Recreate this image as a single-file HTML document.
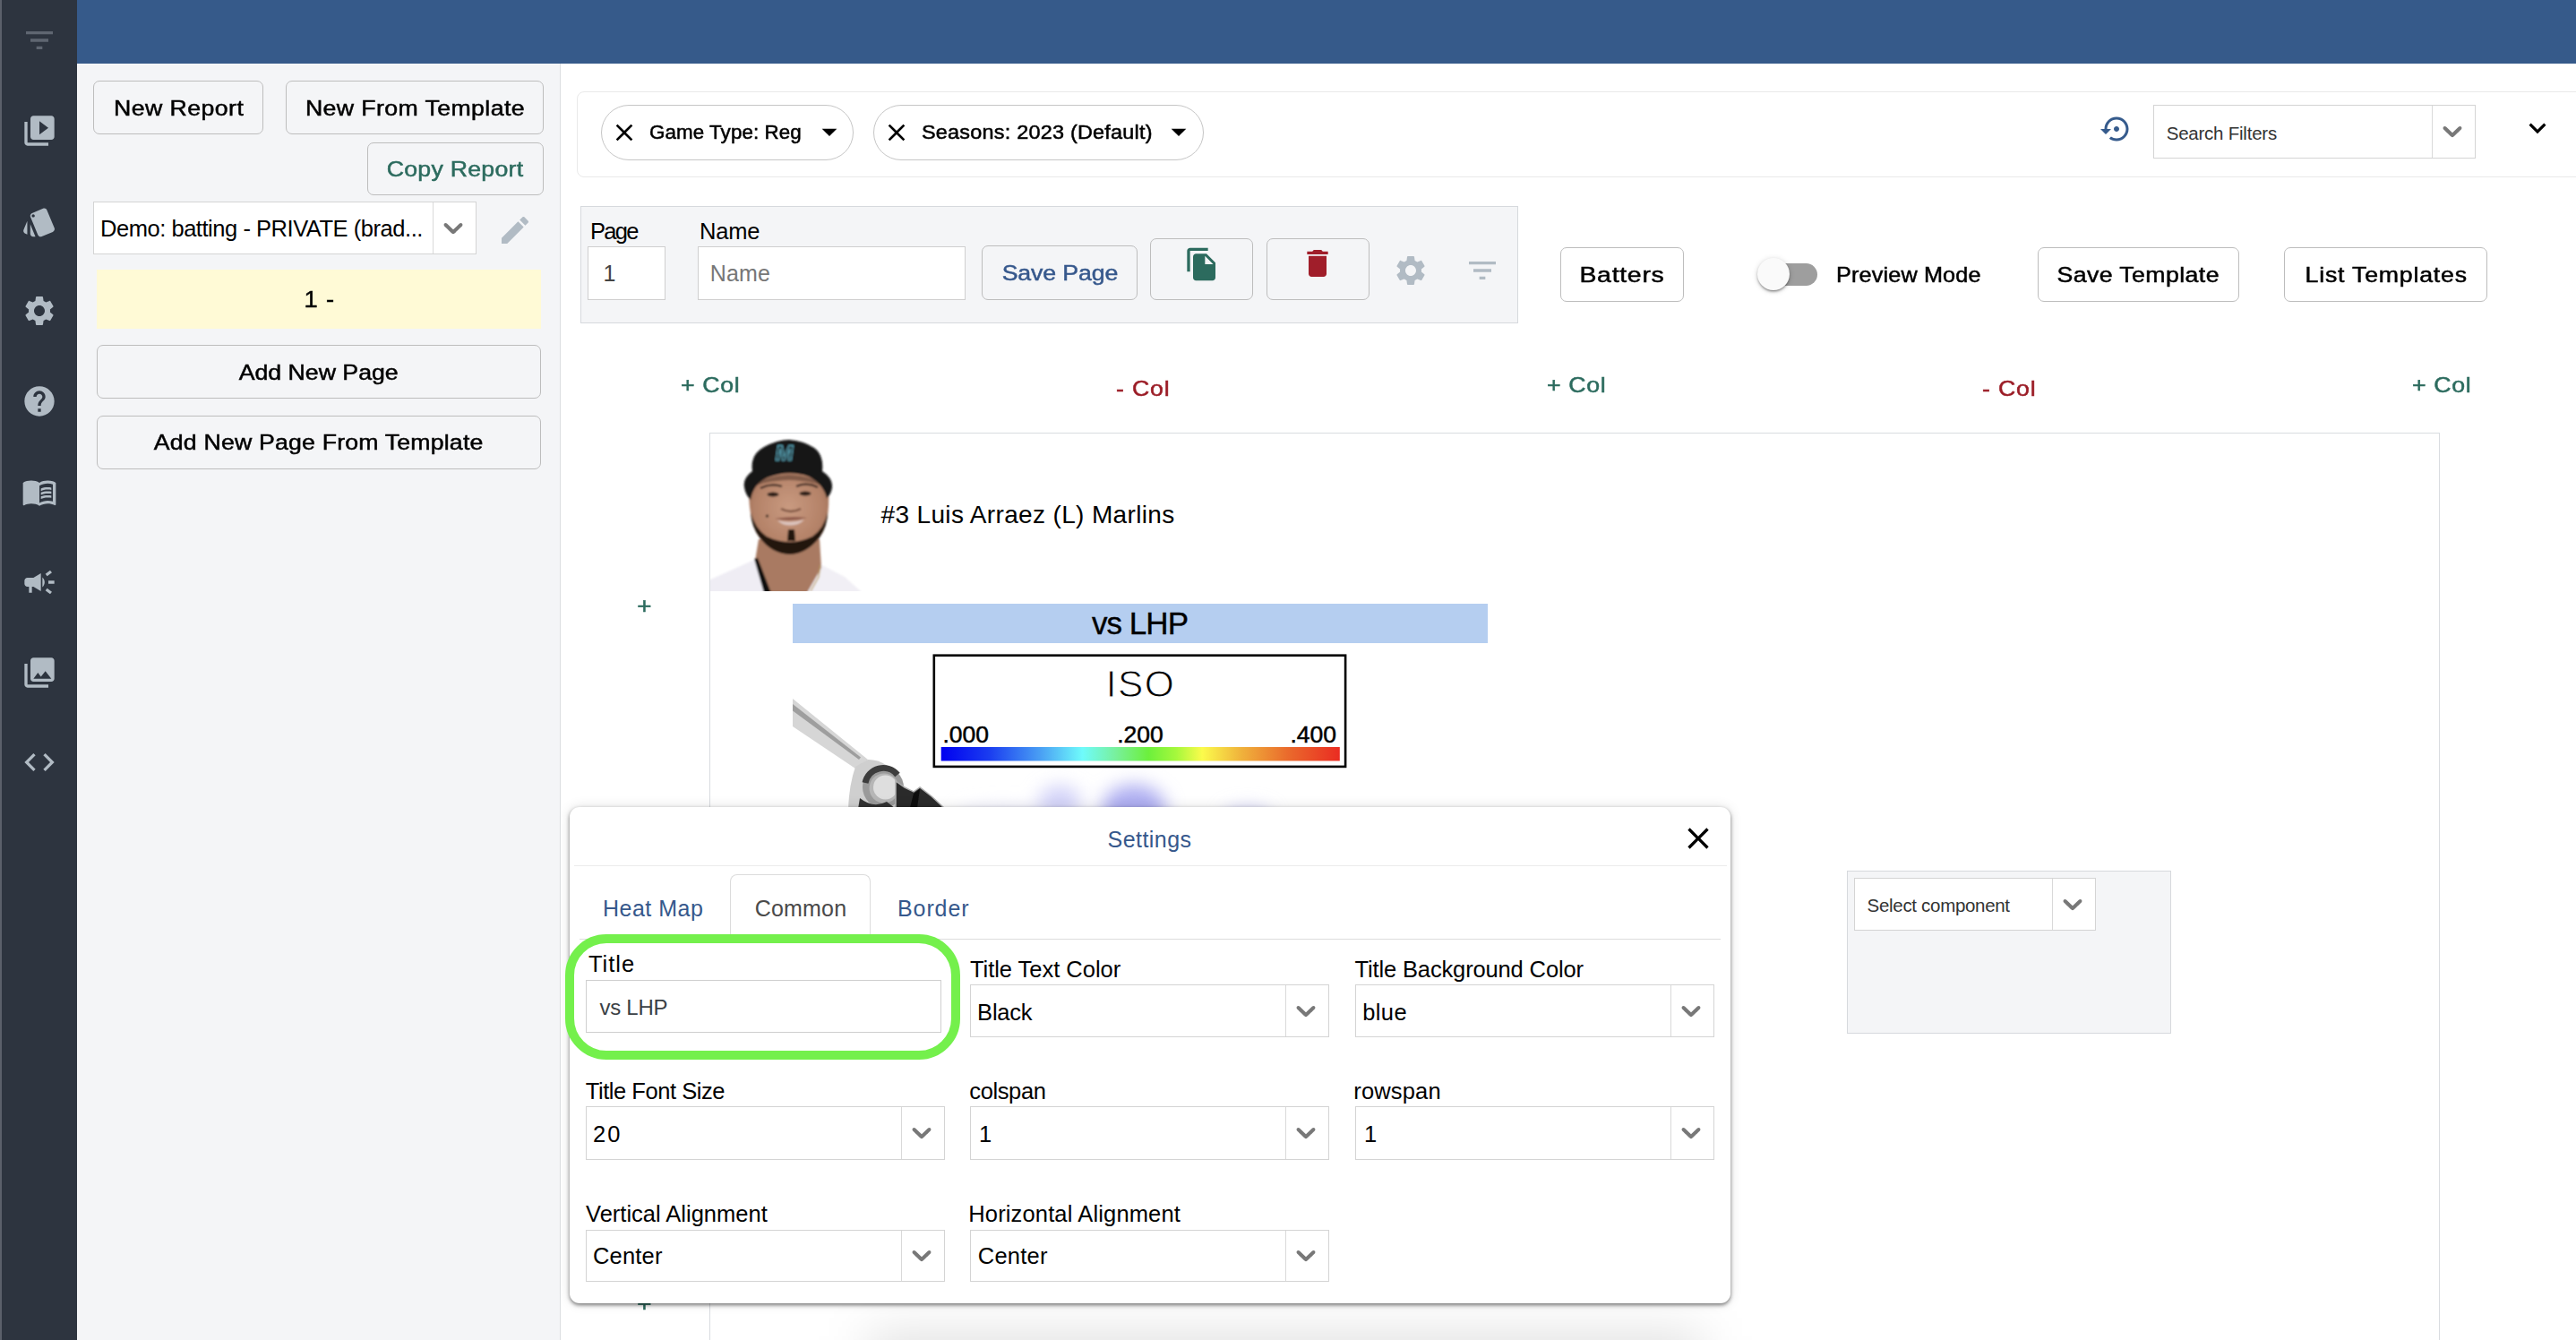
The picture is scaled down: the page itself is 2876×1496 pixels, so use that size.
<!DOCTYPE html>
<html lang="en"><head><meta charset="utf-8"><title>Report Builder</title>
<style>
html,body{margin:0;padding:0;}
body{width:2876px;height:1496px;overflow:hidden;position:relative;background:#fff;font-family:"Liberation Sans",sans-serif;}
body>*{position:absolute;box-sizing:border-box;}
.t{white-space:nowrap;}
.ic{display:block;}
#side{left:0;top:0;width:86px;height:1496px;background:#2d343f;}
#strip{left:0;top:0;width:2px;height:1496px;background:#5b606a;}
#top{left:86px;top:0;width:2790px;height:71px;background:#365a8a;}
#left{left:86px;top:71px;width:540px;height:1425px;background:#f4f5f7;border-right:1px solid #dcdee1;}
.btn{border:1px solid #bdbdbd;border-radius:7px;}
.pill{border:1px solid #c6c6c6;border-radius:31px;background:#fff;}
.sel{border:1px solid #d4d4d4;background:#fff;}
.inp{border:1px solid #cfcfcf;background:#fff;}
.sep{background:#d9d9d9;}
#bigshadow{left:970px;top:1490px;width:930px;height:60px;background:rgba(0,0,0,.13);filter:blur(28px);}
</style></head>
<body>
<div id="side"></div><div id="strip"></div><div id="top"></div><div id="left"></div>
<svg class="ic" style="left:24px;top:25px;width:40px;height:40px;fill:#5f6671" viewBox="0 0 24 24"><path d="M10 18h4v-2h-4v2zM3 6v2h18V6H3zm3 7h12v-2H6v2z"/></svg>
<svg class="ic" style="left:24px;top:126px;width:40px;height:40px;fill:#b1bbc4" viewBox="0 0 24 24"><path d="M4 6H2v14c0 1.1.9 2 2 2h14v-2H4V6zm16-4H8c-1.1 0-2 .9-2 2v12c0 1.1.9 2 2 2h12c1.1 0 2-.9 2-2V4c0-1.1-.9-2-2-2zm-8 12.5v-9l6 4.5-6 4.5z"/></svg>
<svg class="ic" style="left:24px;top:228px;width:40px;height:40px;fill:#b1bbc4" viewBox="0 0 24 24"><path d="M2.53 19.65l1.34.56v-9.03l-2.43 5.86c-.41 1.02.08 2.19 1.09 2.61zm19.5-3.7L17.07 3.98c-.31-.75-1.04-1.21-1.81-1.23-.26 0-.53.04-.79.15L7.1 5.95c-.75.31-1.21 1.03-1.23 1.8-.01.27.04.54.15.8l4.96 11.97c.31.76 1.05 1.22 1.83 1.23.26 0 .52-.05.77-.15l7.36-3.05c1.02-.42 1.51-1.59 1.09-2.6zM7.88 8.75c-.55 0-1-.45-1-1s.45-1 1-1 1 .45 1 1-.45 1-1 1zm-2 11c0 1.1.9 2 2 2h1.45l-3.45-8.34v6.34z"/></svg>
<svg class="ic" style="left:24px;top:327px;width:40px;height:40px;fill:#b1bbc4" viewBox="0 0 24 24"><path d="M19.14 12.94c.04-.3.06-.61.06-.94 0-.32-.02-.64-.07-.94l2.03-1.58c.18-.14.23-.41.12-.61l-1.92-3.32c-.12-.22-.37-.29-.59-.22l-2.39.96c-.5-.38-1.03-.7-1.62-.94l-.36-2.54c-.04-.24-.24-.41-.48-.41h-3.84c-.24 0-.43.17-.47.41l-.36 2.54c-.59.24-1.13.57-1.62.94l-2.39-.96c-.22-.08-.47 0-.59.22L2.74 8.87c-.12.21-.08.47.12.61l2.03 1.58c-.05.3-.09.63-.09.94s.02.64.07.94l-2.03 1.58c-.18.14-.23.41-.12.61l1.92 3.32c.12.22.37.29.59.22l2.39-.96c.5.38 1.03.7 1.62.94l.36 2.54c.05.24.24.41.48.41h3.84c.24 0 .44-.17.47-.41l.36-2.54c.59-.24 1.13-.56 1.62-.94l2.39.96c.22.08.47 0 .59-.22l1.92-3.32c.12-.22.07-.47-.12-.61l-2.01-1.58zM12 15.6c-1.98 0-3.6-1.62-3.6-3.6s1.62-3.6 3.6-3.6 3.6 1.62 3.6 3.6-1.62 3.6-3.6 3.6z"/></svg>
<svg class="ic" style="left:24px;top:428px;width:40px;height:40px;fill:#b1bbc4" viewBox="0 0 24 24"><path d="M12 2C6.48 2 2 6.48 2 12s4.48 10 10 10 10-4.48 10-10S17.52 2 12 2zm1 17h-2v-2h2v2zm2.07-7.75l-.9.92C13.45 12.9 13 13.5 13 15h-2v-.5c0-1.1.45-2.1 1.17-2.83l1.24-1.26c.37-.36.59-.86.59-1.41 0-1.1-.9-2-2-2s-2 .9-2 2H8c0-2.21 1.79-4 4-4s4 1.79 4 4c0 .88-.36 1.68-.93 2.25z"/></svg>
<svg class="ic" style="left:24px;top:529px;width:40px;height:40px;fill:#b1bbc4" viewBox="0 0 24 24"><path d="M21 5c-1.11-.35-2.33-.5-3.5-.5-1.95 0-4.05.4-5.5 1.5-1.45-1.1-3.55-1.5-5.5-1.5S2.45 4.9 1 6v14.65c0 .25.25.5.5.5.1 0 .15-.05.25-.05C3.1 20.45 5.05 20 6.5 20c1.95 0 4.05.4 5.5 1.5 1.35-.85 3.8-1.5 5.5-1.5 1.65 0 3.35.3 4.75 1.05.1.05.15.05.25.05.25 0 .5-.25.5-.5V6c-.6-.45-1.25-.75-2-1zm0 13.5c-1.1-.35-2.3-.5-3.5-.5-1.7 0-4.15.65-5.5 1.5V8c1.35-.85 3.8-1.5 5.5-1.5 1.2 0 2.4.15 3.5.5v11.5zM17.5 10.5c.88 0 1.73.09 2.5.26V9.24c-.79-.15-1.64-.24-2.5-.24-1.7 0-3.24.29-4.5.83v1.66c1.13-.64 2.7-.99 4.5-.99zM13 12.49v1.66c1.13-.64 2.7-.99 4.5-.99.88 0 1.73.09 2.5.26V11.9c-.79-.15-1.64-.24-2.5-.24-1.7 0-3.24.3-4.5.83zM17.5 14.33c-1.7 0-3.24.29-4.5.83v1.66c1.13-.64 2.7-.99 4.5-.99.88 0 1.73.09 2.5.26v-1.52c-.79-.16-1.64-.24-2.5-.24z"/></svg>
<svg class="ic" style="left:24px;top:630px;width:40px;height:40px;fill:#b1bbc4" viewBox="0 0 24 24"><path d="M18 11v2h4v-2h-4zm-2 6.61c.96.71 2.21 1.65 3.2 2.39.4-.53.8-1.07 1.2-1.6-.99-.74-2.24-1.68-3.2-2.4-.4.54-.8 1.08-1.2 1.61zM20.4 5.6c-.4-.53-.8-1.07-1.2-1.6-.99.74-2.24 1.68-3.2 2.4.4.53.8 1.07 1.2 1.6.96-.72 2.21-1.65 3.2-2.4zM4 9c-1.1 0-2 .9-2 2v2c0 1.1.9 2 2 2h1v4h2v-4h1l5 3V6L8 9H4zm11.5 3c0-1.33-.58-2.53-1.5-3.35v6.69c.92-.81 1.5-2.01 1.5-3.34z"/></svg>
<svg class="ic" style="left:24px;top:731px;width:40px;height:40px;fill:#b1bbc4" viewBox="0 0 24 24"><path d="M22 16V4c0-1.1-.9-2-2-2H8c-1.1 0-2 .9-2 2v12c0 1.1.9 2 2 2h12c1.1 0 2-.9 2-2zm-11-4l2.03 2.71L16 11l4 5H8l3-4zM2 6v14c0 1.1.9 2 2 2h14v-2H4V6H2z"/></svg>
<svg class="ic" style="left:24px;top:831px;width:40px;height:40px;fill:#b1bbc4" viewBox="0 0 24 24"><path d="M9.4 16.6L4.8 12l4.6-4.6L8 6l-6 6 6 6 1.4-1.4zm5.2 0l4.6-4.6-4.6-4.6L16 6l6 6-6 6-1.4-1.4z"/></svg>
<div class="btn" style="left:104px;top:90px;width:190px;height:60px;background:transparent;"></div>
<div class="t" style="left:104.19px;width:190px;text-align:center;top:104.67px;font-size:24.5px;line-height:31.85px;color:#000;letter-spacing:0.39px;-webkit-text-stroke:0.5px;"><span id="b_new" style="display:inline-block;transform:scaleX(1.09);transform-origin:center center">New Report</span></div>
<div class="btn" style="left:319px;top:90px;width:288px;height:60px;background:transparent;"></div>
<div class="t" style="left:319.18px;width:288px;text-align:center;top:104.67px;font-size:24.5px;line-height:31.85px;color:#000;letter-spacing:0.36px;-webkit-text-stroke:0.5px;"><span id="b_nft" style="display:inline-block;transform:scaleX(1.09);transform-origin:center center">New From Template</span></div>
<div class="btn" style="left:409.5px;top:158.5px;width:197.5px;height:59px;background:transparent;"></div>
<div class="t" style="left:409.36px;width:198px;text-align:center;top:172.67px;font-size:24.5px;line-height:31.85px;color:#2c6b5e;letter-spacing:0.23px;-webkit-text-stroke:0.5px;"><span id="b_copy" style="display:inline-block;transform:scaleX(1.09);transform-origin:center center">Copy Report</span></div>
<div class="sel" style="left:104px;top:225px;width:427.5px;height:59.4px;"></div>
<div class="sep" style="left:483px;top:226px;width:1px;height:57.4px;"></div>
<svg class="ic" style="left:488px;top:235.9px;width:36px;height:36px;fill:#787878" viewBox="0 0 20 20"><path d="M4.516 7.548c0.436-0.446 1.043-0.481 1.576 0l3.908 3.747 3.908-3.747c0.533-0.481 1.141-0.446 1.574 0 0.436 0.445 0.408 1.197 0 1.615-0.406 0.418-4.695 4.502-4.695 4.502-0.217 0.223-0.502 0.335-0.787 0.335s-0.570-0.112-0.789-0.335c0 0-4.287-4.084-4.695-4.502s-0.436-1.170 0-1.615z"/></svg>
<div class="t" style="left:112px;top:239.43px;font-size:25.5px;line-height:33.15px;color:#000;letter-spacing:-0.46px;"><span id="s_demo">Demo: batting - PRIVATE (brad...</span></div>
<svg class="ic" style="left:555px;top:237px;width:40px;height:40px;fill:#b1bbc4" viewBox="0 0 24 24"><path d="M3 17.25V21h3.75L17.81 9.94l-3.75-3.75L3 17.25zM20.71 7.04c.39-.39.39-1.02 0-1.41l-2.34-2.34c-.39-.39-1.02-.39-1.41 0l-1.83 1.83 3.75 3.75 1.83-1.83z"/></svg>
<div class="ab" style="left:108px;top:301px;width:496px;height:66px;background:#fffad6;"></div>
<div class="t" style="left:156.38px;width:400px;text-align:center;top:317.75px;font-size:25px;line-height:32.5px;color:#000;letter-spacing:0.76px;-webkit-text-stroke:0.5px;"><span id="t_1" style="display:inline-block;transform:scaleX(1.09);transform-origin:center center">1 -</span></div>
<div class="btn" style="left:108px;top:385px;width:496px;height:60px;background:transparent;"></div>
<div class="t" style="left:108px;width:496px;text-align:center;top:399.68px;font-size:24.5px;line-height:31.85px;color:#000;letter-spacing:-0.01px;-webkit-text-stroke:0.5px;"><span id="b_anp" style="display:inline-block;transform:scaleX(1.09);transform-origin:center center">Add New Page</span></div>
<div class="btn" style="left:108px;top:463.5px;width:496px;height:60.5px;background:transparent;"></div>
<div class="t" style="left:108.08px;width:496px;text-align:center;top:478.43px;font-size:24.5px;line-height:31.85px;color:#000;letter-spacing:0.16px;-webkit-text-stroke:0.5px;"><span id="b_anpt" style="display:inline-block;transform:scaleX(1.09);transform-origin:center center">Add New Page From Template</span></div>
<div class="ab" style="left:644px;top:101.5px;width:2256px;height:96px;border:1px solid #e9e9e9;border-radius:8px;background:#fff;"></div>
<div class="pill" style="left:671px;top:117px;width:282.3px;height:62px;"></div>
<div class="pill" style="left:975px;top:117px;width:368.5px;height:62px;"></div>
<svg class="ic" style="left:681px;top:132px;width:32px;height:32px;fill:#000" viewBox="0 0 24 24"><path d="M19 6.41L17.59 5 12 10.59 6.41 5 5 6.41 10.59 12 5 17.59 6.41 19 12 13.41 17.59 19 19 17.59 13.41 12z"/></svg>
<svg class="ic" style="left:985px;top:132px;width:32px;height:32px;fill:#000" viewBox="0 0 24 24"><path d="M19 6.41L17.59 5 12 10.59 6.41 5 5 6.41 10.59 12 5 17.59 6.41 19 12 13.41 17.59 19 19 17.59 13.41 12z"/></svg>
<div class="t" style="left:725.16px;top:134.53px;font-size:21.5px;line-height:27.95px;color:#000;letter-spacing:0.08px;-webkit-text-stroke:0.5px;"><span id="p_gt" style="display:inline-block;transform:scaleX(1.04);transform-origin:left center">Game Type: Reg</span></div>
<div class="t" style="left:1028.91px;top:134.53px;font-size:21.5px;line-height:27.95px;color:#000;letter-spacing:0.2px;-webkit-text-stroke:0.5px;"><span id="p_se" style="display:inline-block;transform:scaleX(1.09);transform-origin:left center">Seasons: 2023 (Default)</span></div>
<svg class="ic" style="left:905.5px;top:127.2px;width:40px;height:40px;fill:#000" viewBox="0 0 24 24"><path d="M7 10l5 5 5-5z"/></svg>
<svg class="ic" style="left:1296.4px;top:127.2px;width:40px;height:40px;fill:#000" viewBox="0 0 24 24"><path d="M7 10l5 5 5-5z"/></svg>
<svg class="ic" style="left:2345px;top:125.5px;width:36px;height:36px;fill:#365b8c" viewBox="0 0 24 24"><path d="M14 12c0-1.1-.9-2-2-2s-2 .9-2 2 .9 2 2 2 2-.9 2-2zm-2-9c-4.970 0-9 4.030-9 9H0l4 4 4-4H5c0-3.870 3.130-7 7-7s7 3.130 7 7-3.130 7-7 7c-1.510 0-2.910-.490-4.060-1.300l-1.420 1.440C8.040 20.300 9.940 21 12 21c4.970 0 9-4.030 9-9s-4.030-9-9-9z"/></svg>
<div class="sel" style="left:2404px;top:117.3px;width:360px;height:59.4px;"></div>
<div class="sep" style="left:2715px;top:118.3px;width:1px;height:57.4px;"></div>
<svg class="ic" style="left:2720.25px;top:128.2px;width:36px;height:36px;fill:#787878" viewBox="0 0 20 20"><path d="M4.516 7.548c0.436-0.446 1.043-0.481 1.576 0l3.908 3.747 3.908-3.747c0.533-0.481 1.141-0.446 1.574 0 0.436 0.445 0.408 1.197 0 1.615-0.406 0.418-4.695 4.502-4.695 4.502-0.217 0.223-0.502 0.335-0.787 0.335s-0.570-0.112-0.789-0.335c0 0-4.287-4.084-4.695-4.502s-0.436-1.170 0-1.615z"/></svg>
<div class="t" style="left:2418.7px;top:135.98px;font-size:20.5px;line-height:26.65px;color:#333;letter-spacing:-0.23px;"><span id="s_sf">Search Filters</span></div>
<svg class="ic" style="left:2813.5px;top:123.5px;width:38px;height:38px;fill:#000" viewBox="0 0 24 24"><path d="M16.59 8.590L12 13.170 7.410 8.590 6 10l6 6 6-6z"/></svg>
<div class="ab" style="left:648px;top:230px;width:1047px;height:131px;background:#f4f5f7;border:1px solid #d6d9dd;"></div>
<div class="t" style="left:659px;top:241.93px;font-size:25.5px;line-height:33.15px;color:#000;letter-spacing:-1.67px;"><span id="l_page">Page</span></div>
<div class="t" style="left:781px;top:241.93px;font-size:25.5px;line-height:33.15px;color:#000;letter-spacing:-0.23px;"><span id="l_name">Name</span></div>
<div class="inp" style="left:656px;top:275px;width:87px;height:59.6px;"></div>
<div class="inp" style="left:779px;top:275px;width:298.5px;height:59.6px;"></div>
<div class="t" style="left:673.4px;top:288.75px;font-size:25px;line-height:32.5px;color:#444;letter-spacing:0px;"><span id="i_1">1</span></div>
<div class="t" style="left:792.8px;top:288.75px;font-size:25px;line-height:32.5px;color:#777;letter-spacing:0.18px;"><span id="i_name">Name</span></div>
<div class="btn" style="left:1096px;top:274px;width:174px;height:61px;background:transparent;"></div>
<div class="t" style="left:1095.94px;width:174px;text-align:center;top:289.18px;font-size:24.5px;line-height:31.85px;color:#36588c;letter-spacing:-0.12px;-webkit-text-stroke:0.5px;"><span id="b_save" style="display:inline-block;transform:scaleX(1.09);transform-origin:center center">Save Page</span></div>
<div class="btn" style="left:1284px;top:266px;width:115px;height:69px;background:transparent;"></div>
<svg class="ic" style="left:1322px;top:274.5px;width:40px;height:40px;fill:#2c6b5e" viewBox="0 0 24 24"><path d="M16 1H4c-1.1 0-2 .9-2 2v14h2V3h12V1zm-1 4l6 6v10c0 1.1-.9 2-2 2H7.990C6.89 23 6 22.100 6 21l.01-14c0-1.1.89-2 1.99-2h7zm-1 7h5.5L14 6.500V12z"/></svg>
<div class="btn" style="left:1414px;top:266px;width:115px;height:69px;background:transparent;"></div>
<svg class="ic" style="left:1451px;top:274px;width:40px;height:40px;fill:#a01e2a" viewBox="0 0 24 24"><path d="M6 19c0 1.1.9 2 2 2h8c1.1 0 2-.9 2-2V7H6v12zM19 4h-3.500l-1-1h-5l-1 1H5v2h14V4z"/></svg>
<svg class="ic" style="left:1555px;top:282px;width:40px;height:40px;fill:#b1bbc4" viewBox="0 0 24 24"><path d="M19.14 12.94c.04-.3.06-.61.06-.94 0-.32-.02-.64-.07-.94l2.03-1.58c.18-.14.23-.41.12-.61l-1.92-3.32c-.12-.22-.37-.29-.59-.22l-2.39.96c-.5-.38-1.03-.7-1.62-.94l-.36-2.54c-.04-.24-.24-.41-.48-.41h-3.84c-.24 0-.43.17-.47.41l-.36 2.54c-.59.24-1.13.57-1.62.94l-2.39-.96c-.22-.08-.47 0-.59.22L2.74 8.87c-.12.21-.08.47.12.61l2.03 1.58c-.05.3-.09.63-.09.94s.02.64.07.94l-2.03 1.58c-.18.14-.23.41-.12.61l1.92 3.32c.12.22.37.29.59.22l2.39-.96c.5.38 1.03.7 1.62.94l.36 2.54c.05.24.24.41.48.41h3.84c.24 0 .44-.17.47-.41l.36-2.54c.59-.24 1.13-.56 1.62-.94l2.39.96c.22.08.47 0 .59-.22l1.92-3.32c.12-.22.07-.47-.12-.61l-2.01-1.58zM12 15.6c-1.98 0-3.6-1.62-3.6-3.6s1.62-3.6 3.6-3.6 3.6 1.62 3.6 3.6-1.62 3.6-3.6 3.6z"/></svg>
<svg class="ic" style="left:1635px;top:281.7px;width:40px;height:40px;fill:#b1bbc4" viewBox="0 0 24 24"><path d="M10 18h4v-2h-4v2zM3 6v2h18V6H3zm3 7h12v-2H6v2z"/></svg>
<div class="btn" style="left:1742px;top:276px;width:138px;height:61px;background:#fff;"></div>
<div class="t" style="left:1742.31px;width:138px;text-align:center;top:291.18px;font-size:24.5px;line-height:31.85px;color:#000;letter-spacing:0.62px;-webkit-text-stroke:0.5px;"><span id="b_bat" style="display:inline-block;transform:scaleX(1.16);transform-origin:center center">Batters</span></div>
<div class="ab" style="left:1966px;top:293.5px;width:63px;height:25px;background:#9e9e9e;border-radius:12.5px;"></div>
<div class="ab" style="left:1962px;top:288px;width:36px;height:36px;background:#fafafa;border-radius:18px;box-shadow:0 2px 2px -1px rgba(0,0,0,.3),0 2px 3px rgba(0,0,0,.2),0 1px 6px rgba(0,0,0,.16);"></div>
<div class="t" style="left:2049.54px;top:290.57px;font-size:24.5px;line-height:31.85px;color:#000;letter-spacing:0.14px;-webkit-text-stroke:0.5px;"><span id="t_prev" style="display:inline-block;transform:scaleX(1.03);transform-origin:left center">Preview Mode</span></div>
<div class="btn" style="left:2275px;top:276px;width:225px;height:61px;background:#fff;"></div>
<div class="t" style="left:2275.19px;width:225px;text-align:center;top:291.18px;font-size:24.5px;line-height:31.85px;color:#000;letter-spacing:0.37px;-webkit-text-stroke:0.5px;"><span id="b_st" style="display:inline-block;transform:scaleX(1.09);transform-origin:center center">Save Template</span></div>
<div class="btn" style="left:2550px;top:276px;width:227px;height:61px;background:#fff;"></div>
<div class="t" style="left:2550.37px;width:227px;text-align:center;top:291.18px;font-size:24.5px;line-height:31.85px;color:#000;letter-spacing:0.73px;-webkit-text-stroke:0.5px;"><span id="b_lt" style="display:inline-block;transform:scaleX(1.09);transform-origin:center center">List Templates</span></div>
<div class="t" style="left:759.64px;top:414.38px;font-size:24.5px;line-height:31.85px;color:#2c6b5e;letter-spacing:0.58px;-webkit-text-stroke:0.5px;"><span id="c1" style="display:inline-block;transform:scaleX(1.09);transform-origin:left center">+ Col</span></div>
<div class="t" style="left:1245.91px;top:418.38px;font-size:24.5px;line-height:31.85px;color:#9b1c26;letter-spacing:0.76px;-webkit-text-stroke:0.5px;"><span id="c2" style="display:inline-block;transform:scaleX(1.09);transform-origin:left center">- Col</span></div>
<div class="t" style="left:1726.64px;top:414.38px;font-size:24.5px;line-height:31.85px;color:#2c6b5e;letter-spacing:0.58px;-webkit-text-stroke:0.5px;"><span id="c3" style="display:inline-block;transform:scaleX(1.09);transform-origin:left center">+ Col</span></div>
<div class="t" style="left:2212.91px;top:418.38px;font-size:24.5px;line-height:31.85px;color:#9b1c26;letter-spacing:0.76px;-webkit-text-stroke:0.5px;"><span id="c4" style="display:inline-block;transform:scaleX(1.09);transform-origin:left center">- Col</span></div>
<div class="t" style="left:2693.14px;top:414.38px;font-size:24.5px;line-height:31.85px;color:#2c6b5e;letter-spacing:0.58px;-webkit-text-stroke:0.5px;"><span id="c5" style="display:inline-block;transform:scaleX(1.09);transform-origin:left center">+ Col</span></div>
<div class="t" style="left:689px;width:60px;text-align:center;top:659.92px;font-size:25.5px;line-height:33.15px;color:#2c6b5e;letter-spacing:0px;-webkit-text-stroke:0.5px;"><span id="plus1" style="display:inline-block;transform:scaleX(1.09);transform-origin:center center">+</span></div>
<div class="t" style="left:689px;width:60px;text-align:center;top:1439.42px;font-size:25.5px;line-height:33.15px;color:#2c6b5e;letter-spacing:0px;-webkit-text-stroke:0.5px;"><span id="plus2" style="display:inline-block;transform:scaleX(1.09);transform-origin:center center">+</span></div>
<div class="ab" style="left:792px;top:483px;width:1932px;height:1117px;border:1px solid #d9dce0;background:#fff;"></div>
<svg class="ic" style="left:793px;top:484px;width:169px;height:176px" viewBox="0 0 169 176">
<defs><filter id="pb" x="-5%" y="-5%" width="110%" height="110%"><feGaussianBlur stdDeviation="1.2"/></filter>
<radialGradient id="skin" cx="50%" cy="45%" r="60%"><stop offset="0" stop-color="#c99a80"/><stop offset="0.7" stop-color="#b48268"/><stop offset="1" stop-color="#9a6b55"/></radialGradient>
<clipPath id="pc"><rect x="0" y="0" width="169" height="176"/></clipPath></defs>
<g clip-path="url(#pc)" filter="url(#pb)">
<path d="M-2 164 L49 141 L63 178 L-2 178Z" fill="#efedf4"/>
<path d="M123 146 L150 160 L170 178 L108 178Z" fill="#f1eff5"/>
<path d="M54 118 L122 118 L124 150 L108 178 L64 178 L50 142Z" fill="#a97a62"/>
<path d="M49 140 L53 139 L68 178 L60 178Z" fill="#111"/>
<path d="M123 147 L121 160 L112 176" stroke="#b89a5a" stroke-width="1.3" fill="none"/>
<path d="M43 62 Q42 40 87 40 Q133 40 132 62 Q134 100 122 116 Q108 134 89 135 Q68 134 55 116 Q43 100 43 62Z" fill="url(#skin)"/>
<path d="M45 88 Q46 104 55 116 Q68 134 89 135 Q108 134 122 116 Q131 103 131 88 Q127 106 114 115 Q101 121 89 121 Q76 121 63 115 Q50 106 45 88Z" fill="#21170f"/><path d="M47 60 Q60 47 88 46 Q116 47 129 60 Q116 53 88 52 Q60 53 47 60Z" fill="#6b4a3c" opacity="0.7"/>
<path d="M87 107 L94 107 L95 120 L86 120Z" fill="#21170f"/>
<path d="M75 97 Q90 101 105 96 Q99 102.500 90 102.500 Q80 102.500 75 97Z" fill="#dcc4be"/>
<path d="M72 95 Q90 92 108 94 Q90 99 72 95Z" fill="#8a5546"/>
<path d="M79 84 Q90 90 101 84" stroke="#7d5241" stroke-width="2.5" fill="none"/>
<ellipse cx="70" cy="68" rx="6.5" ry="2.6" fill="#2a1c18"/><ellipse cx="106" cy="67" rx="6.5" ry="2.6" fill="#2a1c18"/>
<path d="M56 61 Q68 55 80 59" stroke="#3a2720" stroke-width="2.2" fill="none"/><path d="M96 59 Q108 54 120 60" stroke="#3a2720" stroke-width="2.2" fill="none"/>
<circle cx="63.500" cy="92" r="1.6" fill="#2a1c18"/>
<path d="M38 60 Q36 50 47 42 Q44 24 60 15 Q75 7 88 7 Q104 8 116 16 Q127 24 125 42 Q137 50 136 60 Q135 68 130 72 Q126 56 110 48 Q88 40 64 49 Q48 56 45 74 Q39 68 38 60Z" fill="#131313"/>
<text x="86" y="30" font-family="Liberation Sans, sans-serif" font-weight="bold" font-size="24" text-anchor="middle" fill="#1a1a1a" stroke="#5fb0c4" stroke-width="1.1" transform="skewX(-8)">M</text>
</g></svg>
<div class="t" style="left:983.5px;top:556.8px;font-size:28px;line-height:36.4px;color:#000;letter-spacing:0.35px;"><span id="t_player">#3 Luis Arraez (L) Marlins</span></div>
<div class="ab" style="left:885px;top:674px;width:776px;height:44px;background:#b5cef0;"></div>
<div class="t" style="left:1072.53px;width:400px;text-align:center;top:673.25px;font-size:35px;line-height:45.5px;color:#000;letter-spacing:-0.95px;-webkit-text-stroke:0.4px;"><span id="t_vs">vs LHP</span></div>
<svg class="ic" style="left:885px;top:720px;width:776px;height:182px" viewBox="885 720 776 182">
<defs><filter id="hb" x="-50%" y="-50%" width="200%" height="200%"><feGaussianBlur stdDeviation="10"/></filter>
<filter id="sb"><feGaussianBlur stdDeviation="0.6"/></filter>
<linearGradient id="jet" x1="0" x2="1" y1="0" y2="0"><stop offset="0" stop-color="#0000f0"/><stop offset="0.12" stop-color="#1a3cf0"/><stop offset="0.25" stop-color="#4aa0f4"/><stop offset="0.355" stop-color="#6ffbfb"/><stop offset="0.44" stop-color="#78f09a"/><stop offset="0.52" stop-color="#6cf03c"/><stop offset="0.59" stop-color="#a6f83c"/><stop offset="0.655" stop-color="#fbfb4c"/><stop offset="0.75" stop-color="#f0b43c"/><stop offset="0.87" stop-color="#ea6a2c"/><stop offset="1" stop-color="#ea2c22"/></linearGradient></defs>
<g filter="url(#hb)"><ellipse cx="1183" cy="896" rx="24" ry="19" fill="#d2d2f8"/><ellipse cx="1266" cy="903" rx="36" ry="27" fill="#adadf1"/><ellipse cx="1393" cy="912" rx="26" ry="11" fill="#d4d4f8"/><ellipse cx="1120" cy="910" rx="50" ry="10" fill="#ececfc"/></g>
<g filter="url(#sb)">
<path d="M885 780 L969 848 L955 858 L885 811Z" fill="#d6d6d6"/>
<path d="M885 786 L961 845.500 L959 848 L885 793.500Z" fill="#9e9e9e"/>
<path d="M955 856 Q948 876 947 903 L1004 903 L1004 872 Q992 848 969 848Z" fill="#cfcfcf"/>
<circle cx="986" cy="879" r="23" fill="#9a9a9a"/>
<path d="M966 874 A20.500 20.500 0 0 1 1002 865" fill="none" stroke="#3c3c3c" stroke-width="7"/>
<circle cx="987" cy="880" r="16.500" fill="#b6b6b6"/>
<circle cx="988.500" cy="879" r="13.500" fill="#dedede"/>
<path d="M960 891 Q975 903 990 895 L1000 903 L958 903Z" fill="#333"/>
<path d="M1000 872 L1010 879 L1020 884 L1027 879 L1040 889 L1054 902 L1000 902Z" fill="#2c2c2c" stroke="#b0b0b0" stroke-width="1.500"/>
<path d="M1020 886 L1027 881 L1024 902 L1016 902Z" fill="#0c0c0c"/>
</g>
<rect x="1042.800" y="731.700" width="459.300" height="124.200" fill="#fff" stroke="#000" stroke-width="2.600"/>
<rect x="1050.700" y="834" width="445.100" height="15.500" fill="url(#jet)"/>
<text x="1273.500" y="778" text-anchor="middle" font-family="Liberation Sans, sans-serif" font-size="42.500" letter-spacing="1.500" fill="#000" stroke="#fff" stroke-width="1">ISO</text>
<text x="1052.400" y="829.300" font-family="Liberation Sans, sans-serif" font-size="26.500" fill="#000" stroke="#000" stroke-width="0.500">.000</text>
<text x="1273" y="829.300" text-anchor="middle" font-family="Liberation Sans, sans-serif" font-size="26.500" fill="#000" stroke="#000" stroke-width="0.500">.200</text>
<text x="1492" y="829.300" text-anchor="end" font-family="Liberation Sans, sans-serif" font-size="26.500" fill="#000" stroke="#000" stroke-width="0.500">.400</text>
</svg>
<div class="ab" style="left:2062px;top:972px;width:362px;height:182px;background:#f4f5f7;border:1px solid #d6d9dd;"></div>
<div class="sel" style="left:2070px;top:980.2px;width:270px;height:58.5px;"></div>
<div class="sep" style="left:2290.7px;top:981.2px;width:1px;height:56.5px;"></div>
<svg class="ic" style="left:2296.1px;top:990.65px;width:36px;height:36px;fill:#787878" viewBox="0 0 20 20"><path d="M4.516 7.548c0.436-0.446 1.043-0.481 1.576 0l3.908 3.747 3.908-3.747c0.533-0.481 1.141-0.446 1.574 0 0.436 0.445 0.408 1.197 0 1.615-0.406 0.418-4.695 4.502-4.695 4.502-0.217 0.223-0.502 0.335-0.787 0.335s-0.570-0.112-0.789-0.335c0 0-4.287-4.084-4.695-4.502s-0.436-1.170 0-1.615z"/></svg>
<div class="t" style="left:2084.6px;top:998.42px;font-size:20.5px;line-height:26.65px;color:#333;letter-spacing:-0.31px;"><span id="s_sc">Select component</span></div>
<div id="bigshadow"></div>
<div class="ab" style="left:636px;top:900.5px;width:1296px;height:554.1px;background:#fff;border-radius:11px;box-shadow:0 2px 4px rgba(0,0,0,.5),0 0 14px rgba(0,0,0,.12);"></div>
<div class="t" style="left:1133.53px;width:300px;text-align:center;top:920.75px;font-size:25px;line-height:32.5px;color:#36588c;letter-spacing:0.46px;"><span id="m_set">Settings</span></div>
<svg class="ic" style="left:1876px;top:916.4px;width:40px;height:40px;fill:#000" viewBox="0 0 24 24"><path d="M19 6.41L17.59 5 12 10.59 6.41 5 5 6.41 10.59 12 5 17.59 6.41 19 12 13.41 17.59 19 19 17.59 13.41 12z"/></svg>
<div class="ab" style="left:641px;top:966px;width:1287px;height:1px;background:#ececec;"></div>
<div class="ab" style="left:647px;top:1048px;width:1274px;height:1px;background:#dcdcdc;"></div>
<div class="ab" style="left:815.4px;top:976.4px;width:156.2px;height:72.6px;border:1px solid #dcdcdc;border-bottom:1px solid #fff;border-radius:8px 8px 0 0;background:#fff;"></div>
<div class="t" style="left:673px;top:997.75px;font-size:25px;line-height:32.5px;color:#36588c;letter-spacing:0.49px;"><span id="tab1">Heat Map</span></div>
<div class="t" style="left:842.65px;top:997.75px;font-size:25px;line-height:32.5px;color:#4a4a4a;letter-spacing:0.2px;"><span id="tab2">Common</span></div>
<div class="t" style="left:1002px;top:997.75px;font-size:25px;line-height:32.5px;color:#36588c;letter-spacing:0.9px;"><span id="tab3">Border</span></div>
<div class="t" style="left:657px;top:1060.12px;font-size:25.5px;line-height:33.15px;color:#000;letter-spacing:0.96px;"><span id="l_title">Title</span></div>
<div class="inp" style="left:654px;top:1094.4px;width:396.8px;height:59px;"></div>
<div class="t" style="left:669.4px;top:1108.9px;font-size:24px;line-height:31.2px;color:#3a3f45;letter-spacing:-0.25px;"><span id="i_vs">vs LHP</span></div>
<div class="t" style="left:1082.9px;top:1066.42px;font-size:25.5px;line-height:33.15px;color:#000;letter-spacing:-0.02px;"><span id="l_ttc">Title Text Color</span></div>
<div class="sel" style="left:1083.4px;top:1099.4px;width:400.4px;height:59.1px;"></div>
<div class="sep" style="left:1435.1px;top:1100.4px;width:1px;height:57.1px;"></div>
<svg class="ic" style="left:1440.2px;top:1110.15px;width:36px;height:36px;fill:#787878" viewBox="0 0 20 20"><path d="M4.516 7.548c0.436-0.446 1.043-0.481 1.576 0l3.908 3.747 3.908-3.747c0.533-0.481 1.141-0.446 1.574 0 0.436 0.445 0.408 1.197 0 1.615-0.406 0.418-4.695 4.502-4.695 4.502-0.217 0.223-0.502 0.335-0.787 0.335s-0.570-0.112-0.789-0.335c0 0-4.287-4.084-4.695-4.502s-0.436-1.170 0-1.615z"/></svg>
<div class="t" style="left:1091.1px;top:1113.67px;font-size:25.5px;line-height:33.15px;color:#000;letter-spacing:-0.21px;"><span id="s_black">Black</span></div>
<div class="t" style="left:1512.5px;top:1066.42px;font-size:25.5px;line-height:33.15px;color:#000;letter-spacing:-0.14px;"><span id="l_tbc">Title Background Color</span></div>
<div class="sel" style="left:1513px;top:1099.4px;width:400.6px;height:59.1px;"></div>
<div class="sep" style="left:1865.2px;top:1100.4px;width:1px;height:57.1px;"></div>
<svg class="ic" style="left:1870.15px;top:1110.15px;width:36px;height:36px;fill:#787878" viewBox="0 0 20 20"><path d="M4.516 7.548c0.436-0.446 1.043-0.481 1.576 0l3.908 3.747 3.908-3.747c0.533-0.481 1.141-0.446 1.574 0 0.436 0.445 0.408 1.197 0 1.615-0.406 0.418-4.695 4.502-4.695 4.502-0.217 0.223-0.502 0.335-0.787 0.335s-0.570-0.112-0.789-0.335c0 0-4.287-4.084-4.695-4.502s-0.436-1.170 0-1.615z"/></svg>
<div class="t" style="left:1521.25px;top:1113.67px;font-size:25.5px;line-height:33.15px;color:#000;letter-spacing:0.38px;"><span id="s_blue">blue</span></div>
<div class="t" style="left:653.8px;top:1202.42px;font-size:25.5px;line-height:33.15px;color:#000;letter-spacing:-0.46px;"><span id="l_tfs">Title Font Size</span></div>
<div class="sel" style="left:654px;top:1235.4px;width:400.8px;height:59.2px;"></div>
<div class="sep" style="left:1006px;top:1236.4px;width:1px;height:57.2px;"></div>
<svg class="ic" style="left:1011.15px;top:1246.2px;width:36px;height:36px;fill:#787878" viewBox="0 0 20 20"><path d="M4.516 7.548c0.436-0.446 1.043-0.481 1.576 0l3.908 3.747 3.908-3.747c0.533-0.481 1.141-0.446 1.574 0 0.436 0.445 0.408 1.197 0 1.615-0.406 0.418-4.695 4.502-4.695 4.502-0.217 0.223-0.502 0.335-0.787 0.335s-0.570-0.112-0.789-0.335c0 0-4.287-4.084-4.695-4.502s-0.436-1.170 0-1.615z"/></svg>
<div class="t" style="left:661.95px;top:1249.72px;font-size:25.5px;line-height:33.15px;color:#000;letter-spacing:2.25px;"><span id="s_20">20</span></div>
<div class="t" style="left:1082.3px;top:1202.42px;font-size:25.5px;line-height:33.15px;color:#000;letter-spacing:-0.38px;"><span id="l_col">colspan</span></div>
<div class="sel" style="left:1083.4px;top:1235.4px;width:400.4px;height:59.2px;"></div>
<div class="sep" style="left:1435.1px;top:1236.4px;width:1px;height:57.2px;"></div>
<svg class="ic" style="left:1440.2px;top:1246.2px;width:36px;height:36px;fill:#787878" viewBox="0 0 20 20"><path d="M4.516 7.548c0.436-0.446 1.043-0.481 1.576 0l3.908 3.747 3.908-3.747c0.533-0.481 1.141-0.446 1.574 0 0.436 0.445 0.408 1.197 0 1.615-0.406 0.418-4.695 4.502-4.695 4.502-0.217 0.223-0.502 0.335-0.787 0.335s-0.570-0.112-0.789-0.335c0 0-4.287-4.084-4.695-4.502s-0.436-1.170 0-1.615z"/></svg>
<div class="t" style="left:1093.1px;top:1249.72px;font-size:25.5px;line-height:33.15px;color:#000;letter-spacing:0px;"><span id="s_c1">1</span></div>
<div class="t" style="left:1511.25px;top:1202.42px;font-size:25.5px;line-height:33.15px;color:#000;letter-spacing:0.17px;"><span id="l_row">rowspan</span></div>
<div class="sel" style="left:1513px;top:1235.4px;width:400.6px;height:59.2px;"></div>
<div class="sep" style="left:1865.2px;top:1236.4px;width:1px;height:57.2px;"></div>
<svg class="ic" style="left:1870.15px;top:1246.2px;width:36px;height:36px;fill:#787878" viewBox="0 0 20 20"><path d="M4.516 7.548c0.436-0.446 1.043-0.481 1.576 0l3.908 3.747 3.908-3.747c0.533-0.481 1.141-0.446 1.574 0 0.436 0.445 0.408 1.197 0 1.615-0.406 0.418-4.695 4.502-4.695 4.502-0.217 0.223-0.502 0.335-0.787 0.335s-0.570-0.112-0.789-0.335c0 0-4.287-4.084-4.695-4.502s-0.436-1.170 0-1.615z"/></svg>
<div class="t" style="left:1523px;top:1249.72px;font-size:25.5px;line-height:33.15px;color:#000;letter-spacing:0px;"><span id="s_r1">1</span></div>
<div class="t" style="left:654.05px;top:1338.92px;font-size:25.5px;line-height:33.15px;color:#000;letter-spacing:0px;"><span id="l_va">Vertical Alignment</span></div>
<div class="sel" style="left:654px;top:1372.7px;width:400.8px;height:58.1px;"></div>
<div class="sep" style="left:1006px;top:1373.7px;width:1px;height:56.1px;"></div>
<svg class="ic" style="left:1011.15px;top:1382.95px;width:36px;height:36px;fill:#787878" viewBox="0 0 20 20"><path d="M4.516 7.548c0.436-0.446 1.043-0.481 1.576 0l3.908 3.747 3.908-3.747c0.533-0.481 1.141-0.446 1.574 0 0.436 0.445 0.408 1.197 0 1.615-0.406 0.418-4.695 4.502-4.695 4.502-0.217 0.223-0.502 0.335-0.787 0.335s-0.570-0.112-0.789-0.335c0 0-4.287-4.084-4.695-4.502s-0.436-1.170 0-1.615z"/></svg>
<div class="t" style="left:661.95px;top:1386.47px;font-size:25.5px;line-height:33.15px;color:#000;letter-spacing:0.2px;"><span id="s_vc">Center</span></div>
<div class="t" style="left:1081.3px;top:1338.92px;font-size:25.5px;line-height:33.15px;color:#000;letter-spacing:0.14px;"><span id="l_ha">Horizontal Alignment</span></div>
<div class="sel" style="left:1083.4px;top:1372.7px;width:400.4px;height:58.1px;"></div>
<div class="sep" style="left:1435.1px;top:1373.7px;width:1px;height:56.1px;"></div>
<svg class="ic" style="left:1440.2px;top:1382.95px;width:36px;height:36px;fill:#787878" viewBox="0 0 20 20"><path d="M4.516 7.548c0.436-0.446 1.043-0.481 1.576 0l3.908 3.747 3.908-3.747c0.533-0.481 1.141-0.446 1.574 0 0.436 0.445 0.408 1.197 0 1.615-0.406 0.418-4.695 4.502-4.695 4.502-0.217 0.223-0.502 0.335-0.787 0.335s-0.570-0.112-0.789-0.335c0 0-4.287-4.084-4.695-4.502s-0.436-1.170 0-1.615z"/></svg>
<div class="t" style="left:1091.85px;top:1386.47px;font-size:25.5px;line-height:33.15px;color:#000;letter-spacing:0.2px;"><span id="s_hc">Center</span></div>
<div class="ab" style="left:631px;top:1043px;width:441px;height:140px;border:10.5px solid #74f04c;border-radius:46px;box-sizing:border-box;"></div>
</body></html>
